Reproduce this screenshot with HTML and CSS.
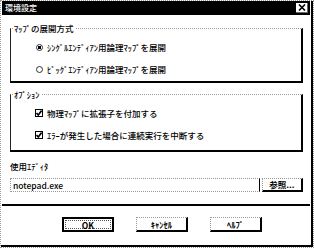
FILE: index.html
```html
<!DOCTYPE html>
<html lang="ja">
<head>
    <meta charset="UTF-8">
    <title>環境設定</title>
    <link rel="stylesheet" href="styles.css">
</head>
<body>
    <div class="window">
        <div class="frame">
            <div class="titlebar">
                <span class="title">環境設定</span>
                <span class="close">
                    <svg width="8" height="7" viewBox="0 0 8 7"><path d="M1 0.5 L7 6.5 M7 0.5 L1 6.5" stroke="#000" stroke-width="1.6"/></svg>
                </span>
            </div>

            <div class="content">
                <fieldset class="group g-map">
                    <legend>ﾏｯﾌﾟの展開方式</legend>
                    <div class="opts">
                        <div class="opt"><span class="radio on"></span>ｼﾝｸﾞﾙｴﾝﾃﾞｨｱﾝ用論理ﾏｯﾌﾟを展開</div>
                        <div class="opt"><span class="radio"></span>ﾋﾞｯｸﾞｴﾝﾃﾞｨｱﾝ用論理ﾏｯﾌﾟを展開</div>
                    </div>
                </fieldset>

                <fieldset class="group g-option">
                    <legend>ｵﾌﾟｼｮﾝ</legend>
                    <div class="opts">
                        <div class="opt">
                            <span class="check"><svg width="6" height="6" viewBox="0 0 6 6"><path d="M0.5 3 L2.3 5 L5.6 0.6" fill="none" stroke="#000" stroke-width="1.6"/></svg></span>
                            物理ﾏｯﾌﾟに拡張子を付加する
                        </div>
                        <div class="opt">
                            <span class="check"><svg width="6" height="6" viewBox="0 0 6 6"><path d="M0.5 3 L2.3 5 L5.6 0.6" fill="none" stroke="#000" stroke-width="1.6"/></svg></span>
                            ｴﾗｰが発生した場合に連続実行を中断する
                        </div>
                    </div>
                </fieldset>

                <div class="editor-label">使用ｴﾃﾞｨﾀ</div>
                <div class="editor-row">
                    <div class="path">notepad.exe</div>
                    <div class="btn browse">参照...</div>
                </div>
            </div>

            <div class="sep"></div>

            <div class="buttons">
                <div class="btn default"><span class="focus">OK</span></div>
                <div class="btn">ｷｬﾝｾﾙ</div>
                <div class="btn">ﾍﾙﾌﾟ</div>
            </div>
        </div>
    </div>
</body>
</html>
```

FILE: styles.css
```css
* {
    margin: 0;
    padding: 0;
    box-sizing: border-box;
}

body {
    font-family: "Noto Sans CJK JP", sans-serif;
    font-size: 8.5px;
    font-weight: 500;
    color: #000;
    background: #fff;
}

.window {
    width: 314px;
    height: 248px;
    border: 1px dotted #9a9a9a;
    background: #fff;
}

.frame {
    height: 100%;
    border-right: 2px solid #000;
    border-bottom: 2px solid #000;
    display: flex;
    flex-direction: column;
}

/* title bar */
.titlebar {
    height: 14px;
    margin: 0 1px;
    padding: 0 2px 0 3px;
    background: #000;
    color: #fff;
    font-size: 8px;
    line-height: 14px;
    display: flex;
    align-items: center;
    justify-content: space-between;
}

.close {
    width: 12px;
    height: 10px;
    background: #fff;
    border-right: 1px solid #666;
    border-bottom: 1px solid #666;
    display: flex;
    align-items: center;
    justify-content: center;
}

.content {
    padding: 0 8px 0 9px;
}

/* group boxes */
.group {
    border: 0;
    border-top: 1px dotted #9a9a9a;
    border-left: 1px solid #222;
    border-right: 2px solid #000;
    border-bottom: 2px solid #000;
}

.group legend {
    margin-left: 2px;
    padding: 0 1px;
    line-height: 11px;
}

.g-map {
    height: 60px;
    margin-top: 8px;
}

.g-option {
    height: 63px;
    margin-top: 6px;
}

.opts {
    padding: 7px 0 0 25px;
    display: flex;
    flex-direction: column;
    gap: 10px;
}

.opt {
    height: 12px;
    line-height: 12px;
    display: flex;
    align-items: center;
    gap: 4px;
    white-space: nowrap;
}

.radio {
    width: 7px;
    height: 7px;
    border-radius: 50%;
    border: 1px solid #333;
    background: #fff;
}

.radio.on {
    background: radial-gradient(circle, #000 0 1.5px, #fff 2px);
}

.check {
    width: 8px;
    height: 8px;
    margin-left: -1px;
    border: 1px solid #000;
    display: flex;
    align-items: center;
    justify-content: center;
}

/* editor */
.editor-label {
    margin-top: 8px;
    line-height: 12px;
}

.editor-row {
    margin-top: 6px;
    height: 14px;
    display: flex;
    gap: 2px;
}

.path {
    flex: 1;
    padding-left: 2px;
    line-height: 12px;
    border: 1px dotted #999;
    border-right: 1px solid #000;
}

.sep {
    height: 2px;
    margin: 12px 1px 0;
    background: #000;
}

/* buttons */
.buttons {
    margin-top: 11px;
    padding-left: 61px;
    display: flex;
    gap: 22px;
}

.btn {
    width: 52px;
    height: 15px;
    font-weight: bold;
    text-align: center;
    line-height: 12px;
    border-top: 1px dotted #999;
    border-left: 1px dotted #999;
    border-right: 2px solid #000;
    border-bottom: 2px solid #000;
    background: #fff;
}

.btn.browse {
    width: 41px;
    height: 14px;
    line-height: 11px;
}

.btn.default {
    border: 2px solid #000;
    padding: 1px;
}

.btn.default .focus {
    display: block;
    height: 100%;
    line-height: 9px;
    border: 1px dotted #555;
}
```
